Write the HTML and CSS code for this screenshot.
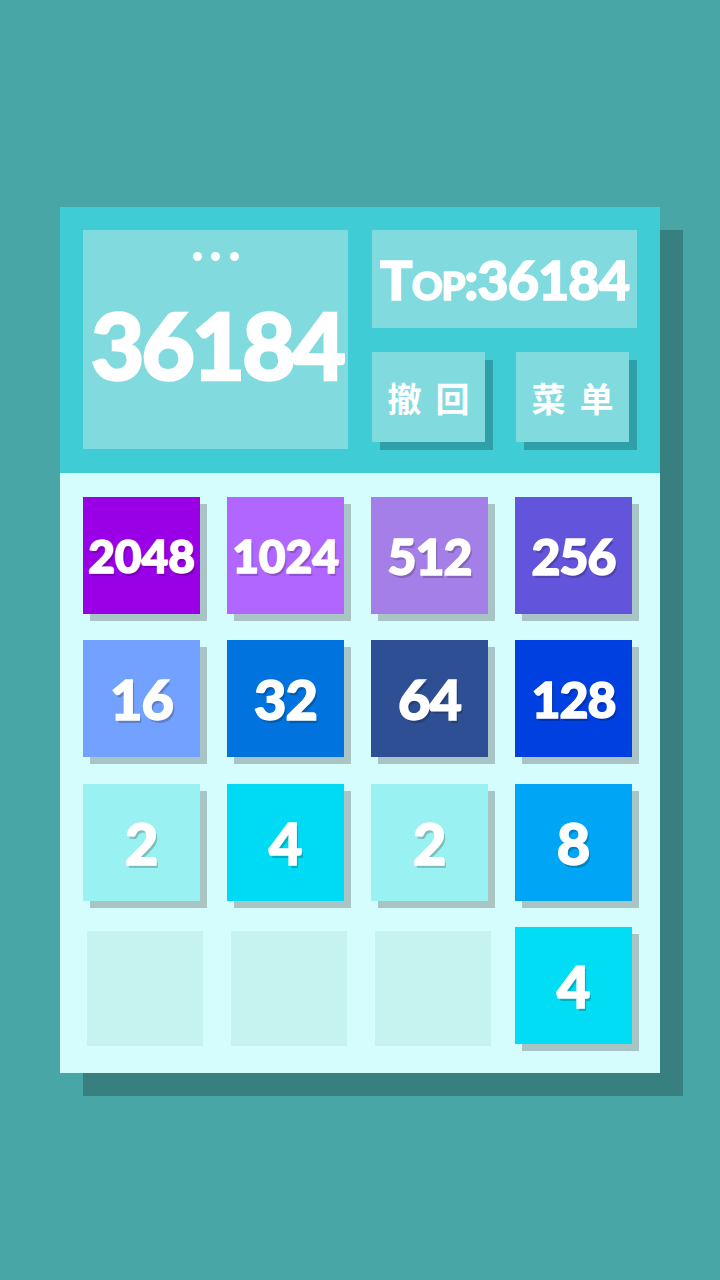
FILE: index.html
```html
<!DOCTYPE html>
<html lang="zh">
<head>
<meta charset="utf-8">
<title>2048</title>
<link rel="stylesheet" href="styles.css">
</head>
<body>
<div class="page">
  <div class="card">
    <div class="header">
      <div class="score">
        <div class="dots"><span></span><span></span><span></span></div>
        <div class="score-num">36184</div>
      </div>
      <div class="side">
        <div class="top">Top:36184</div>
        <div class="buttons">
          <div class="btn"><span>撤回</span></div>
          <div class="btn"><span>菜单</span></div>
        </div>
      </div>
    </div>
    <div class="board">
      <div class="tile t2048 d4">2048</div>
      <div class="tile t1024 d4">1024</div>
      <div class="tile t512 d3">512</div>
      <div class="tile t256 d3">256</div>
      <div class="tile t16 d2">16</div>
      <div class="tile t32 d2">32</div>
      <div class="tile t64 d2">64</div>
      <div class="tile t128 d3">128</div>
      <div class="tile t2 d1">2</div>
      <div class="tile t4 d1">4</div>
      <div class="tile t2 d1">2</div>
      <div class="tile t8 d1">8</div>
      <div class="empty"></div>
      <div class="empty"></div>
      <div class="empty"></div>
      <div class="tile t4b d1">4</div>
    </div>
  </div>
</div>
</body>
</html>
```
FILE: styles.css
```css
html, body {
  margin: 0;
  padding: 0;
}
body {
  background: #48a6a6;
  font-family: "Lato", "Roboto", "Noto Sans", sans-serif;
}
.page {
  width: 720px;
  height: 1280px;
  display: flex;
  align-items: center;
  justify-content: center;
}
.card {
  width: 600px;
  box-shadow: 23px 23px 0 #388080;
}
.header {
  background: #40ccd4;
  padding: 23px 23px 24px 23px;
  display: grid;
  grid-template-columns: 265px 265px;
  column-gap: 24px;
}
.score {
  height: 219px;
  background: #80dade;
  display: flex;
  flex-direction: column;
  align-items: center;
  padding-top: 22px;
  box-sizing: border-box;
}
.dots {
  display: flex;
  gap: 9.5px;
}
.dots span {
  width: 9px;
  height: 9px;
  border-radius: 50%;
  background: #ffffff;
}
.score-num {
  color: #ffffff;
  font-weight: 900;
  font-size: 92px;
  line-height: 92px;
  letter-spacing: -3px;
  margin-right: -3px;
  margin-top: 38px;
  -webkit-text-stroke: 2.5px #ffffff;
}
.side {
  display: flex;
  flex-direction: column;
  gap: 24px;
}
.top {
  height: 98px;
  background: #80dade;
  color: #ffffff;
  font-weight: 900;
  font-size: 54px;
  font-variant: small-caps;
  letter-spacing: -1px;
  -webkit-text-stroke: 1.5px #ffffff;
  display: flex;
  align-items: center;
  justify-content: center;
}
.buttons {
  display: flex;
  gap: 31px;
}
.btn {
  width: 113px;
  height: 90px;
  background: #80dade;
  box-shadow: 8px 8px 0 #30a0a8;
  display: flex;
  align-items: center;
  justify-content: center;
  color: #ffffff;
  font-family: "Noto Sans CJK SC", sans-serif;
  font-weight: 700;
  font-size: 34px;
}
.btn span {
  letter-spacing: 14px;
  margin-right: -14px;
}
.board {
  background: #d5fdfd;
  padding: 24px 29px 29px 23px;
  display: grid;
  grid-template-columns: repeat(4, 117px);
  grid-auto-rows: 117px;
  column-gap: 27px;
  row-gap: 26.33px;
}
.tile {
  box-shadow: 7px 7px 0 #a9c4c4;
  color: #ffffff;
  font-weight: 900;
  display: flex;
  align-items: center;
  justify-content: center;
  text-shadow: 2px 3px 0 rgba(0, 0, 0, 0.2);
  -webkit-text-stroke: 1.5px #ffffff;
}
.d1 { font-size: 58px; }
.d2 { font-size: 56px; letter-spacing: -1px; }
.d3 { font-size: 50px; letter-spacing: -1px; }
.d4 { font-size: 46px; letter-spacing: 0; }
.empty {
  width: 116px;
  height: 115px;
  margin: 4px 0 0 4px;
  background: #c6f2f0;
}
.t2048 { background: #9900e6; }
.t1024 { background: #b066ff; }
.t512 { background: #a47fe8; }
.t256 { background: #6355db; }
.t16 { background: #73a1ff; }
.t32 { background: #0073de; }
.t64 { background: #2e4f94; }
.t128 { background: #0040e0; }
.t2 { background: #9af1f2; }
.t4 { background: #00dbf5; }
.t8 { background: #00a6f5; }
.t4b { background: #00ddf4; }
```
